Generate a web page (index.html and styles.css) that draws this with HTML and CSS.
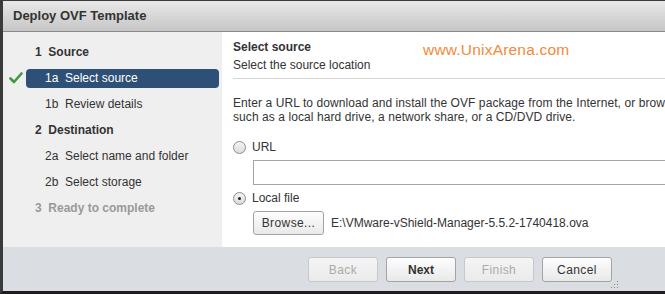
FILE: index.html
```html
<!DOCTYPE html>
<html>
<head>
<meta charset="utf-8">
<link rel="stylesheet" href="styles.css">
</head>
<body>
<div class="window">
  <div class="titlebar">Deploy OVF Template</div>
  <div class="main">
    <nav class="steps">
      <div class="step head">1&nbsp; Source</div>
      <div class="step sub done">
        <svg class="check" width="14" height="12" viewBox="0 0 14 12"><path d="M1.5 6.5 L5 10 L12.5 1.5" fill="none" stroke="#3f9b3f" stroke-width="2.6" stroke-linecap="round" stroke-linejoin="round"/></svg>
        <span class="pill">1a&nbsp; Select source</span>
      </div>
      <div class="step sub">1b&nbsp; Review details</div>
      <div class="step head">2&nbsp; Destination</div>
      <div class="step sub">2a&nbsp; Select name and folder</div>
      <div class="step sub">2b&nbsp; Select storage</div>
      <div class="step head disabled">3&nbsp; Ready to complete</div>
    </nav>
    <section class="content">
      <div class="content-head">
        <div class="ch-title">Select source</div>
        <div class="ch-sub">Select the source location</div>
        <div class="watermark">www.UnixArena.com</div>
      </div>
      <p class="desc">Enter a URL to download and install the OVF package from the Internet, or browse to a location accessible from your computer,<br>such as a local hard drive, a network share, or a CD/DVD drive.</p>
      <label class="radio-row"><span class="radio"></span>URL</label>
      <div class="url-input"></div>
      <label class="radio-row"><span class="radio checked"></span>Local file</label>
      <div class="file-row">
        <span class="btn browse">Browse...</span>
        <span class="path">E:\VMware-vShield-Manager-5.5.2-1740418.ova</span>
      </div>
    </section>
  </div>
  <div class="footer">
    <span class="btn fbtn disabled">Back</span>
    <span class="btn fbtn primary">Next</span>
    <span class="btn fbtn disabled">Finish</span>
    <span class="btn fbtn">Cancel</span>
    <svg class="grip" width="8" height="8" viewBox="0 0 8 8"><g fill="#888"><rect x="6" y="0" width="1" height="1"/><rect x="3" y="3" width="1" height="1"/><rect x="6" y="3" width="1" height="1"/><rect x="0" y="6" width="1" height="1"/><rect x="3" y="6" width="1" height="1"/><rect x="6" y="6" width="1" height="1"/></g></svg>
  </div>
</div>
</body>
</html>
```
FILE: styles.css
```css
html, body {
  margin: 0;
  padding: 0;
  background: #3a3a3a;
}
body {
  font-family: "Liberation Sans", Arial, sans-serif;
  font-size: 12px;
  color: #333;
  width: 665px;
  height: 294px;
  overflow: hidden;
}
.window {
  box-sizing: border-box;
  width: 665px;
  height: 294px;
  border-left: 3px solid #3a3a3a;
  border-top: 1px solid #3a3a3a;
  border-bottom: 3px solid #1e1e1e;
  display: flex;
  flex-direction: column;
  background: #fff;
  position: relative;
}
.titlebar {
  height: 31px;
  flex: none;
  box-sizing: border-box;
  border-bottom: 1px solid #8a8a8a;
  background: linear-gradient(#e8e8e8, #c6c6c6);
  font-weight: bold;
  font-size: 13px;
  color: #333;
  line-height: 29px;
  padding-left: 10px;
}
.main {
  flex: none;
  height: 215px;
  display: flex;
}
.steps {
  width: 219px;
  flex: none;
  background: #efefef;
  padding-top: 10px;
  box-sizing: border-box;
  display: flex;
  flex-direction: column;
  gap: 6px;
}
.step {
  height: 20px;
  line-height: 20px;
  color: #333;
  white-space: nowrap;
}
.step.head {
  font-weight: bold;
  padding-left: 32px;
}
.step.sub {
  padding-left: 42px;
}
.step.disabled {
  color: #999;
}
.step.done {
  display: flex;
  align-items: center;
  padding-left: 6px;
}
.check {
  flex: none;
  margin-right: 3px;
}
.pill {
  flex: 1;
  margin-right: 3px;
  height: 19px;
  line-height: 19px;
  background: #2e5077;
  color: #fff;
  border-radius: 4px;
  padding-left: 19px;
}
.content {
  flex: 1;
  min-width: 0;
  padding-left: 11px;
  overflow: hidden;
}
.content-head {
  position: relative;
  padding-top: 6px;
  padding-bottom: 4px;
  border-bottom: 1px solid #d4d4d4;
}
.ch-title {
  font-weight: bold;
  line-height: 18px;
}
.ch-sub {
  line-height: 18px;
}
.watermark {
  position: absolute;
  left: 190px;
  top: 9px;
  font-size: 15.5px;
  letter-spacing: 0.2px;
  color: #f28a3a;
  white-space: nowrap;
}
.desc {
  margin: 17px 0 0;
  line-height: 14px;
  letter-spacing: 0.08px;
  white-space: nowrap;
}
.radio-row {
  display: flex;
  align-items: center;
  height: 16px;
  margin-top: 15px;
  gap: 6px;
}
.radio {
  width: 11px;
  height: 11px;
  border: 1px solid #8c8c8c;
  border-radius: 50%;
  background: linear-gradient(#f4f4f4, #dcdcdc);
  position: relative;
  flex: none;
}
.radio.checked::after {
  content: "";
  position: absolute;
  left: 4px;
  top: 4px;
  width: 3px;
  height: 3px;
  border-radius: 50%;
  background: #222;
}
.url-input {
  margin: 5px 0 0 20px;
  height: 25px;
  width: 600px;
  box-sizing: border-box;
  border: 1px solid #a5a5a5;
  background: #fff;
}
.url-input + .radio-row {
  margin-top: 5px;
}
.file-row {
  margin: 5px 0 0 20px;
  display: flex;
  align-items: center;
  gap: 7px;
}
.btn {
  box-sizing: border-box;
  display: inline-flex;
  align-items: center;
  justify-content: center;
  border: 1px solid #a3a3a3;
  border-radius: 3px;
  background: linear-gradient(#fdfdfd, #e9e9e9);
  color: #333;
  letter-spacing: 0.4px;
}
.browse {
  width: 71px;
  height: 24px;
}
.path {
  color: #333;
  white-space: nowrap;
}
.footer {
  flex: 1;
  background: #dadde1;
  display: flex;
  align-items: flex-start;
  justify-content: flex-end;
  padding-top: 10px;
  padding-right: 53px;
  gap: 8px;
  position: relative;
}
.fbtn {
  width: 70px;
  height: 25px;
  font-size: 12px;
}
.fbtn.disabled {
  color: #aaa;
  border-color: #c8c8c8;
  background: linear-gradient(#f4f4f4, #ebebeb);
}
.fbtn.primary {
  font-weight: bold;
  letter-spacing: 0;
}
.grip {
  position: absolute;
  right: 46px;
  bottom: 2px;
}
```
